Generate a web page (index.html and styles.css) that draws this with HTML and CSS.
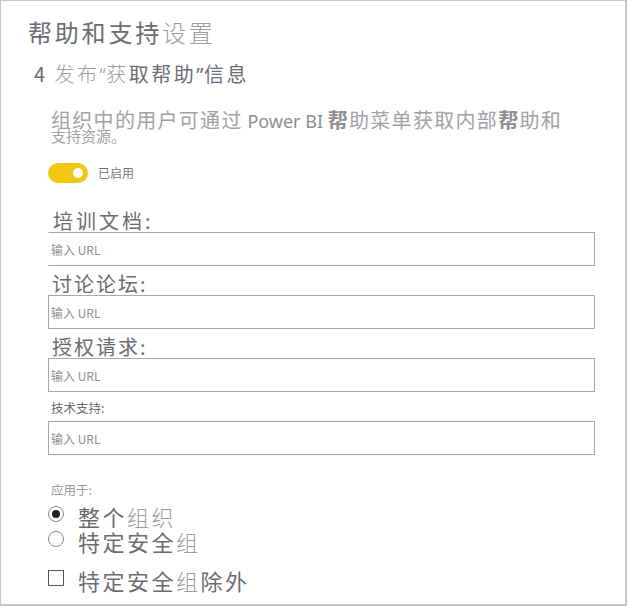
FILE: index.html
```html
<!DOCTYPE html>
<html lang="zh-CN">
<head>
<meta charset="utf-8">
<title>帮助和支持设置</title>
<link rel="stylesheet" href="styles.css">
</head>
<body>
<div class="frame">
  <h1 class="title">帮助和支持<span class="thin">设置</span></h1>
  <h2 class="subtitle">4 <span class="thin">发布<span class="q">“</span>获</span>取帮助<span class="q">”</span>信息</h2>
  <div class="desc">
    <div class="desc-line1">组织中的用户可通过<span class="latin"> Power BI </span><span class="bold">帮</span>助菜单获取内部<span class="bold">帮</span>助和</div>
    <div class="desc-line2">支持资源。</div>
  </div>
  <div class="toggle-row">
    <span class="toggle"><span class="knob"></span></span>
    <span class="toggle-label">已启用</span>
  </div>
  <div class="fields">
    <div class="field first">
      <label class="field-label">培训文档:</label>
      <input class="url no-left" type="text" placeholder="输入 URL">
    </div>
    <div class="field">
      <label class="field-label">讨论论坛:</label>
      <input class="url" type="text" placeholder="输入 URL">
    </div>
    <div class="field">
      <label class="field-label">授权请求:</label>
      <input class="url" type="text" placeholder="输入 URL">
    </div>
    <div class="field small">
      <label class="field-label small-label">技术支持:</label>
      <input class="url" type="text" placeholder="输入 URL">
    </div>
  </div>
  <div class="apply">
    <div class="apply-label">应用于:</div>
    <div class="option">
      <span class="radio checked"><span class="dot"></span></span>
      <span class="option-text">整个<span class="thin">组织</span></span>
    </div>
    <div class="option">
      <span class="radio"></span>
      <span class="option-text">特定安全<span class="thin">组</span></span>
    </div>
    <div class="option check-option">
      <span class="checkbox"></span>
      <span class="option-text">特定安全<span class="thin">组</span>除外</span>
    </div>
  </div>
</div>
</body>
</html>
```
FILE: styles.css
```css
html, body {
  margin: 0;
  padding: 0;
  background: #ffffff;
}
body {
  font-family: "Noto Sans CJK SC", "Noto Sans", sans-serif;
  color: #6e6e72;
}
.frame {
  box-sizing: border-box;
  width: 627px;
  height: 606px;
  border: 2px solid #c6c6c6;
  border-left-width: 1px;
  border-top-width: 1px;
  overflow: hidden;
  display: flex;
  flex-direction: column;
}
.thin {
  color: #9c9ca0;
  font-weight: 300;
}
.title {
  margin: 17px 0 0 27px;
  font-size: 24px;
  line-height: 28px;
  font-weight: 400;
  letter-spacing: 2.8px;
  color: #6c6c74;
}
.subtitle {
  margin: 16px 0 0 33px;
  font-size: 20px;
  line-height: 24px;
  font-weight: 400;
  letter-spacing: 2.5px;
  color: #6c6c74;
}
.subtitle .q {
  font-family: "Noto Sans", sans-serif;
  letter-spacing: 0.5px;
}
.desc {
  margin: 25px 0 0 50px;
  color: #a2a2a6;
}
.desc-line1 {
  font-size: 20px;
  line-height: 15px;
  letter-spacing: 1.3px;
  white-space: nowrap;
}
.desc-line1 .latin {
  font-family: "Noto Sans", sans-serif;
  font-size: 18px;
  letter-spacing: 0;
  color: #8e8e92;
}
.desc-line1 .bold {
  color: #8e8e92;
  font-weight: 700;
}
.desc-line2 {
  font-size: 15px;
  line-height: 14px;
  letter-spacing: 0;
}
.toggle-row {
  margin: 20px 0 0 47px;
  display: flex;
  align-items: center;
  gap: 10px;
}
.toggle {
  box-sizing: border-box;
  width: 40px;
  height: 20px;
  border-radius: 10px;
  background: #f2c811;
  display: flex;
  align-items: center;
  justify-content: flex-end;
  padding-right: 5px;
}
.knob {
  width: 10px;
  height: 10px;
  border-radius: 50%;
  background: #ffffff;
}
.toggle-label {
  font-size: 12px;
  line-height: 20px;
  color: #77777b;
}
.fields {
  margin: 26px 0 0 47px;
  display: flex;
  flex-direction: column;
  gap: 6px;
}
.field {
  display: flex;
  flex-direction: column;
}
.field.small {
  margin-top: 2px;
}
.field-label {
  font-size: 20px;
  line-height: 23px;
  color: #6c6c70;
  padding-left: 4px;
  letter-spacing: 2px;
}
.field.first .field-label {
  padding-left: 5px;
  letter-spacing: 3px;
}
.small-label {
  font-size: 12.5px;
  line-height: 16px;
  letter-spacing: 0;
  padding-left: 3px;
  margin-bottom: 5px;
  color: #6a6a6e;
}
.url {
  box-sizing: border-box;
  width: 547px;
  height: 34px;
  margin: 0;
  border: 1px solid #a8a8a8;
  border-radius: 0;
  padding: 0 0 0 2px;
  font-family: "Noto Sans CJK SC", "Noto Sans", sans-serif;
  font-size: 12px;
  color: #8a8a8e;
  background: #ffffff;
  outline: none;
}
.url.no-left {
  border-left-color: transparent;
}
.url::placeholder {
  color: #8e8e92;
  opacity: 1;
}
.apply {
  margin: 27px 0 0 47px;
  display: flex;
  flex-direction: column;
}
.apply-label {
  font-size: 12.5px;
  line-height: 16px;
  color: #9a9a9e;
  padding-left: 3px;
  margin-bottom: 6px;
}
.option {
  display: flex;
  align-items: flex-start;
  gap: 14px;
}
.check-option {
  margin-top: 14px;
}
.option-text {
  font-size: 22px;
  line-height: 25px;
  letter-spacing: 2.5px;
  color: #6c6c70;
}
.radio {
  box-sizing: border-box;
  width: 16px;
  height: 16px;
  margin-top: 2px;
  border-radius: 50%;
  border: 1px solid #858585;
  display: flex;
  align-items: center;
  justify-content: center;
  flex: none;
}
.radio .dot {
  width: 8px;
  height: 8px;
  border-radius: 50%;
  background: #1f1f1f;
}
.checkbox {
  box-sizing: border-box;
  width: 16px;
  height: 16px;
  margin-top: 2px;
  border: 1px solid #555555;
  flex: none;
}
```
